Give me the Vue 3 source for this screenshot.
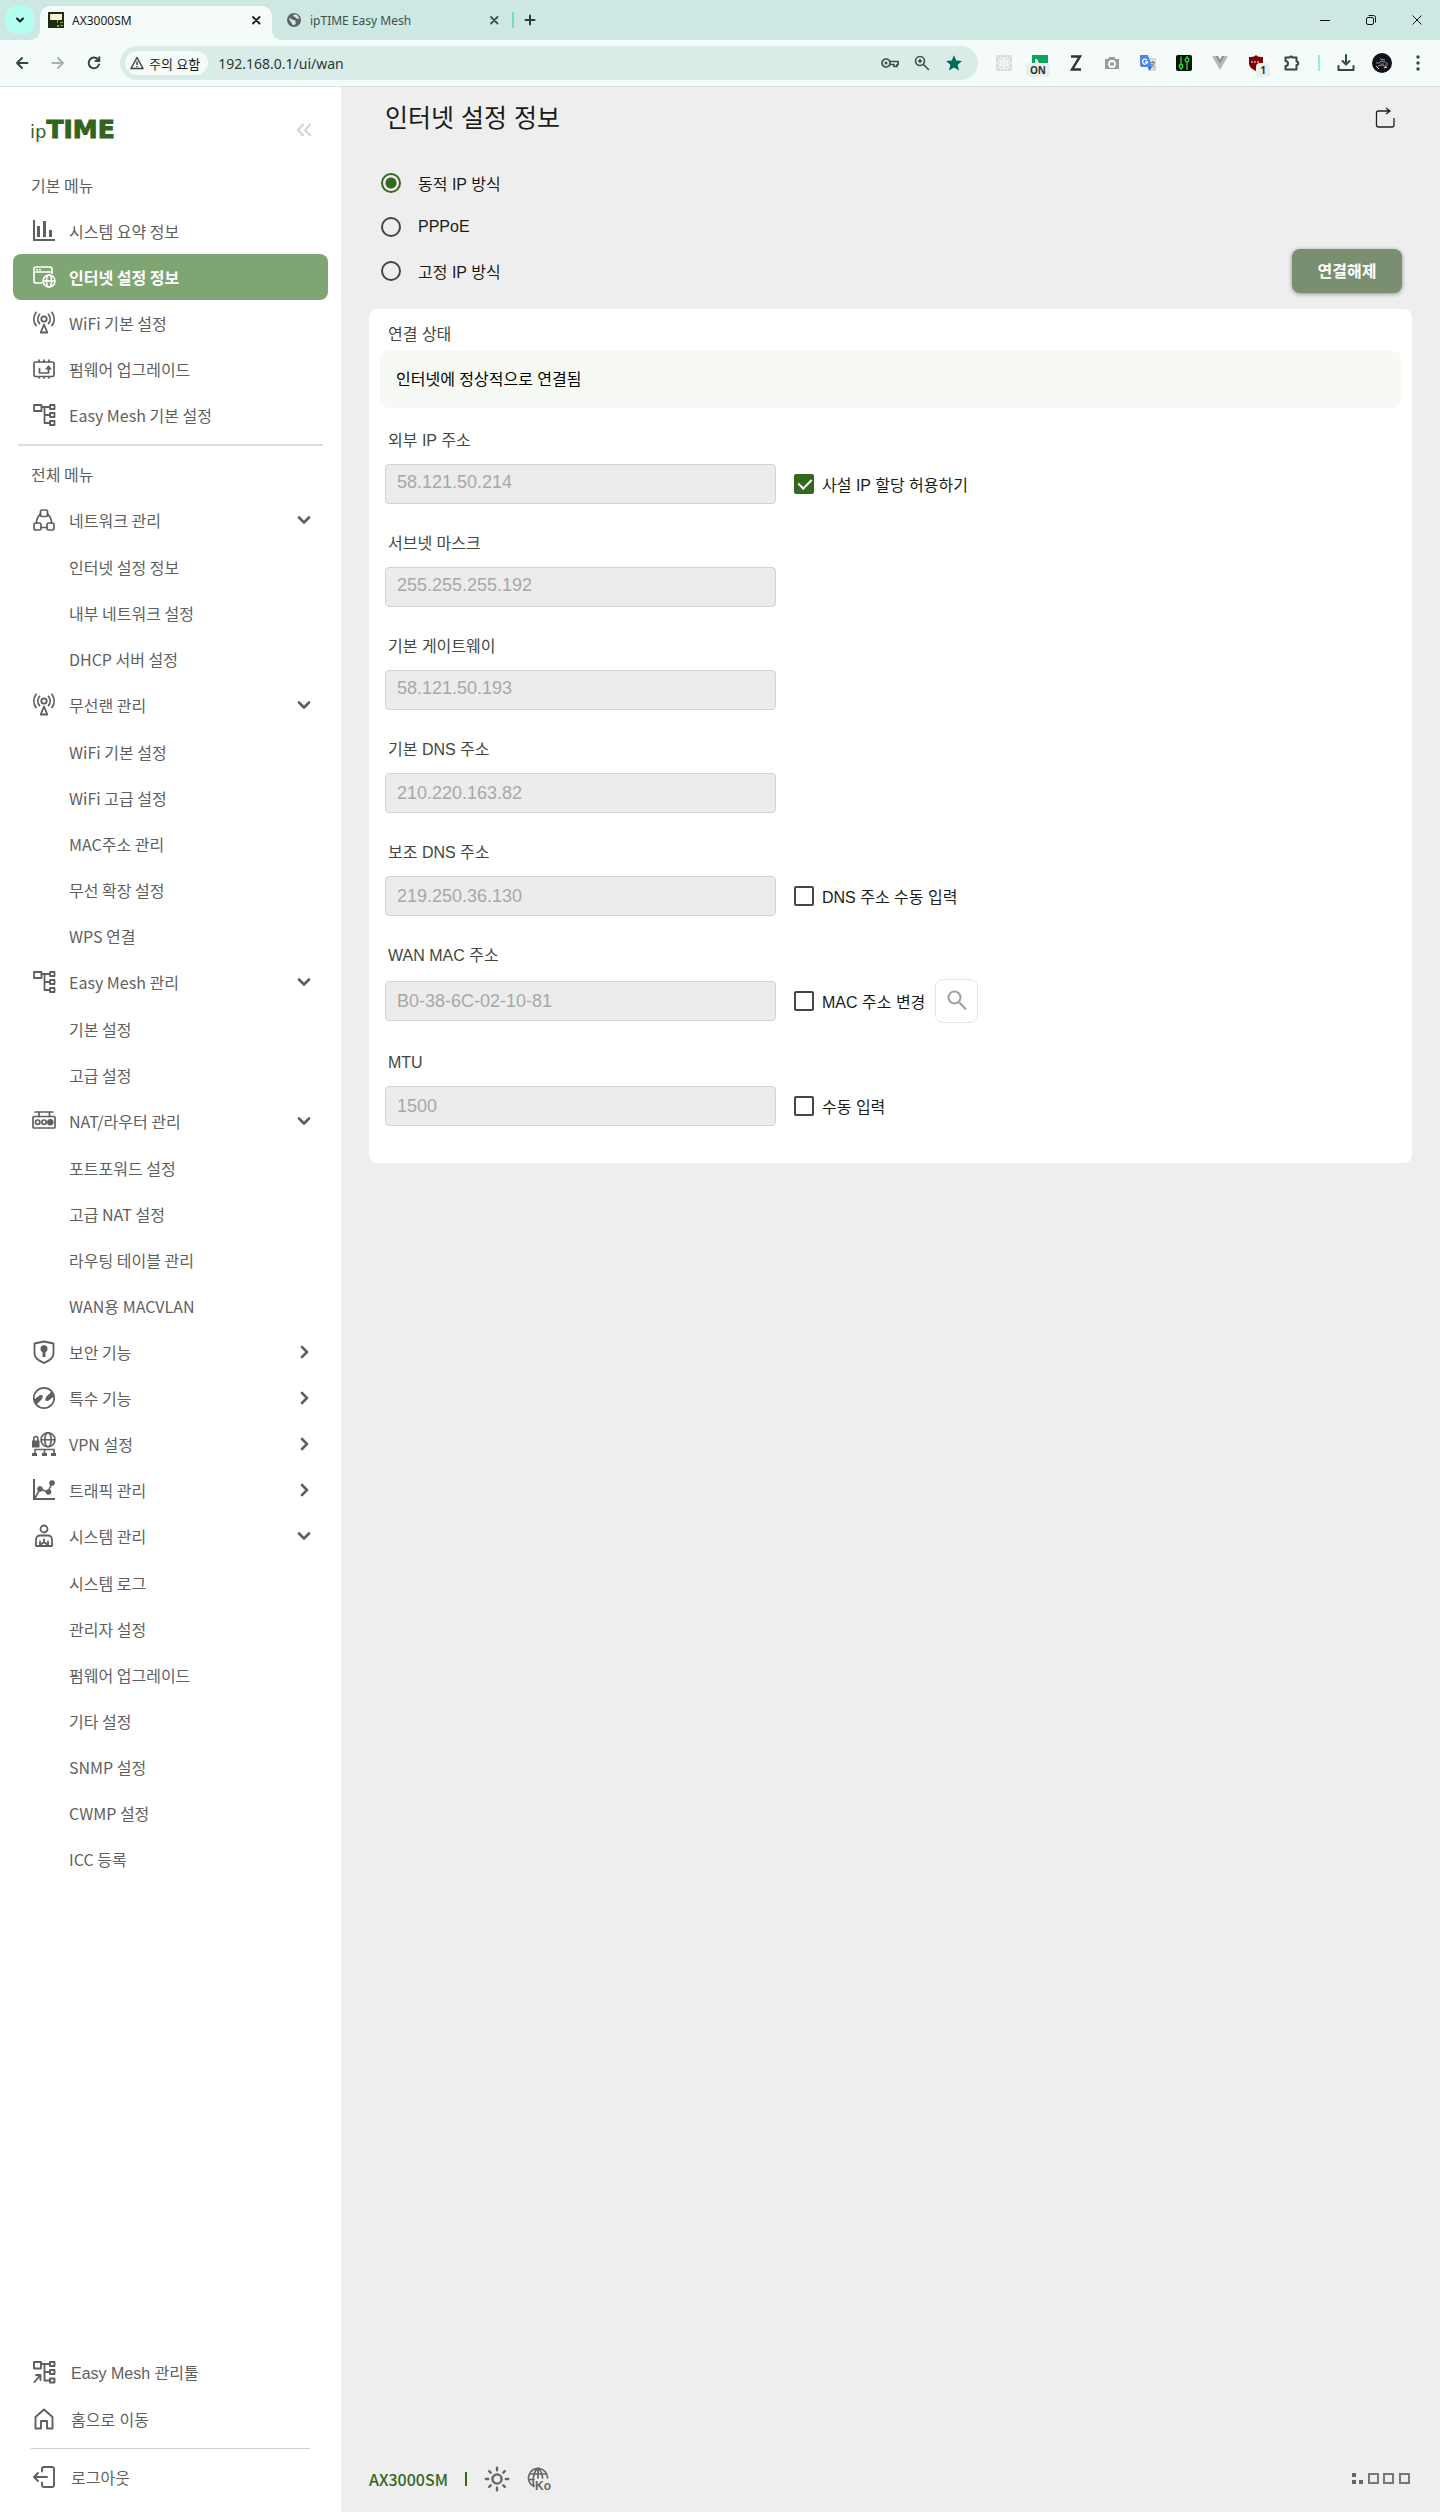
<template>
  <div class="window">

    <!-- TAB STRIP -->
    <header class="tab-strip">
      <button class="tab-search" type="button" aria-label="탭 검색">
        <svg width="12" height="12" viewBox="0 0 12 12" v-html="icons.tabDown"></svg>
      </button>

      <div class="tab tab-active">
        <svg width="16" height="16" viewBox="0 0 16 16" v-html="icons.router"></svg>
        <span class="tab-title">AX3000SM</span>
        <button class="tab-close" type="button" aria-label="탭 닫기">
          <svg width="16" height="16" viewBox="0 0 16 16" v-html="icons.close"></svg>
        </button>
      </div>

      <div class="tab tab-idle">
        <svg width="16" height="16" viewBox="0 0 16 16" v-html="icons.world"></svg>
        <span class="tab-title">ipTIME Easy Mesh</span>
        <button class="tab-close" type="button" aria-label="탭 닫기">
          <svg width="16" height="16" viewBox="0 0 16 16" v-html="icons.close"></svg>
        </button>
      </div>

      <button class="tab-new" type="button" aria-label="새 탭">
        <svg width="16" height="16" viewBox="0 0 16 16" v-html="icons.plus"></svg>
      </button>

      <div class="window-buttons">
        <button v-for="name in ['winMin', 'winRestore', 'winClose']" :key="name" type="button" :aria-label="name">
          <svg width="12" height="12" viewBox="0 0 12 12" v-html="icons[name]"></svg>
        </button>
      </div>
    </header>

    <!-- TOOLBAR -->
    <div class="toolbar">
      <button
        v-for="name in ['back', 'forward', 'reload']"
        :key="name"
        class="tool"
        type="button"
        :aria-label="name"
      >
        <svg width="16" height="16" viewBox="0 0 16 16" v-html="icons[name]"></svg>
      </button>

      <div class="omnibox">
        <button class="chip" type="button">
          <svg width="14" height="14" viewBox="0 0 14 14" v-html="icons.warning"></svg>
          주의 요함
        </button>
        <input v-model="address" class="address" type="text" aria-label="주소창">
        <button v-for="name in ['key', 'zoom', 'star']" :key="name" class="omni-tool" type="button" :aria-label="name">
          <svg width="18" height="18" viewBox="0 0 18 18" v-html="icons[name]"></svg>
        </button>
      </div>

      <button v-for="ext in extensions" :key="ext.icon" class="tool" type="button" :aria-label="ext.icon">
        <svg width="16" height="16" viewBox="0 0 16 16" v-html="icons[ext.icon]"></svg>
        <span v-if="ext.badge" class="badge" :class="'badge-' + ext.icon">{{ ext.badge }}</span>
      </button>

      <span class="tool-divider"></span>

      <button v-for="name in ['download', 'avatar', 'more']" :key="name" class="tool" type="button" :aria-label="name">
        <svg width="20" height="20" viewBox="0 0 20 20" v-html="icons[name]"></svg>
      </button>
    </div>

    <div class="page">

      <!-- SIDEBAR -->
      <aside class="sidebar">
        <div class="brand">
          <a href="#" class="logo" @click.prevent><span class="logo-ip">ip</span><span class="logo-time">TIME</span></a>
          <button type="button" aria-label="메뉴 접기">
            <svg width="24" height="24" viewBox="0 0 24 24" v-html="icons.collapse"></svg>
          </button>
        </div>

        <nav>
          <h2 class="menu-title">기본 메뉴</h2>
          <a
            v-for="item in basicMenu"
            :key="item.label"
            href="#"
            class="menu-item"
            :class="{ active: item.label === currentMenu }"
            @click.prevent="currentMenu = item.label"
          >
            <svg width="24" height="24" viewBox="0 0 24 24" v-html="icons[item.icon]"></svg>
            {{ item.label }}
          </a>

          <hr class="menu-line">

          <h2 class="menu-title">전체 메뉴</h2>
          <div v-for="group in fullMenu" :key="group.label">
            <button class="menu-item" type="button" :aria-expanded="group.open" @click="group.open = !group.open">
              <svg width="24" height="24" viewBox="0 0 24 24" v-html="icons[group.icon]"></svg>
              {{ group.label }}
              <svg
                class="chevron"
                width="24"
                height="24"
                viewBox="0 0 24 24"
                v-html="group.open ? icons.chevronDown : icons.chevronRight"
              ></svg>
            </button>
            <div v-if="group.open && group.children.length" class="submenu">
              <a v-for="child in group.children" :key="child" href="#" class="submenu-item" @click.prevent>
                {{ child }}
              </a>
            </div>
          </div>
        </nav>

        <div class="side-bottom">
          <a href="#" class="bottom-item" @click.prevent>
            <svg width="24" height="24" viewBox="0 0 24 24" v-html="icons.meshTool"></svg>
            Easy Mesh 관리툴
          </a>
          <a href="#" class="bottom-item" @click.prevent>
            <svg width="24" height="24" viewBox="0 0 24 24" v-html="icons.home"></svg>
            홈으로 이동
          </a>
          <hr class="bottom-line">
          <a href="#" class="bottom-item" @click.prevent>
            <svg width="24" height="24" viewBox="0 0 24 24" v-html="icons.logout"></svg>
            로그아웃
          </a>
        </div>
      </aside>

      <!-- MAIN CONTENT -->
      <main class="content">
        <div class="content-head">
          <h1>인터넷 설정 정보</h1>
          <button type="button" aria-label="새로고침">
            <svg width="24" height="24" viewBox="0 0 24 24" v-html="icons.refresh"></svg>
          </button>
        </div>

        <div class="mode-row">
          <div class="modes">
            <label v-for="mode in modes" :key="mode.value" class="mode">
              <input v-model="wanMode" type="radio" name="wan-mode" :value="mode.value">
              {{ mode.label }}
            </label>
          </div>
          <button class="disconnect" type="button">연결해제</button>
        </div>

        <section class="card">
          <h3 class="field-label">연결 상태</h3>
          <p class="status">인터넷에 정상적으로 연결됨</p>

          <div v-for="field in fields" :key="field.id" class="field">
            <label class="field-label" :for="field.id">{{ field.label }}</label>
            <div class="field-row">
              <input
                :id="field.id"
                class="field-input"
                :class="{ raised: field.fixed }"
                type="text"
                :value="field.value"
                disabled
              >
              <label v-if="field.check" class="check">
                <input v-model="field.checked" type="checkbox">
                {{ field.check }}
              </label>
              <button v-if="field.search" class="search" type="button" aria-label="MAC 주소 검색">
                <svg width="24" height="24" viewBox="0 0 24 24" v-html="icons.search"></svg>
              </button>
            </div>
          </div>
        </section>

        <!-- FOOTER -->
        <footer class="content-foot">
          <span class="model">AX3000SM</span>
          <span class="foot-line"></span>
          <button type="button" aria-label="테마">
            <svg width="26" height="26" viewBox="0 0 26 26" v-html="icons.sun"></svg>
          </button>
          <button type="button" aria-label="언어">
            <svg width="26" height="26" viewBox="0 0 26 26" v-html="icons.language"></svg>
          </button>
          <svg class="ports" width="60" height="14" viewBox="0 0 60 14" v-html="icons.ports"></svg>
        </footer>
      </main>
    </div>
  </div>
</template>

<script setup>
import { ref } from 'vue'

const address = ref('192.168.0.1/ui/wan')
const currentMenu = ref('인터넷 설정 정보')
const wanMode = ref('dynamic')

const extensions = [
  { icon: 'react' },
  { icon: 'toggle', badge: 'ON' },
  { icon: 'zed' },
  { icon: 'camera' },
  { icon: 'translate' },
  { icon: 'sliders' },
  { icon: 'vue' },
  { icon: 'shieldExt', badge: '1' },
  { icon: 'puzzle' }
]

const basicMenu = [
  { icon: 'bars', label: '시스템 요약 정보' },
  { icon: 'internet', label: '인터넷 설정 정보' },
  { icon: 'wifi', label: 'WiFi 기본 설정' },
  { icon: 'firmware', label: '펌웨어 업그레이드' },
  { icon: 'mesh', label: 'Easy Mesh 기본 설정' }
]

const fullMenu = ref([
  { icon: 'network', label: '네트워크 관리', open: true, children: ['인터넷 설정 정보', '내부 네트워크 설정', 'DHCP 서버 설정'] },
  { icon: 'wifi', label: '무선랜 관리', open: true, children: ['WiFi 기본 설정', 'WiFi 고급 설정', 'MAC주소 관리', '무선 확장 설정', 'WPS 연결'] },
  { icon: 'mesh', label: 'Easy Mesh 관리', open: true, children: ['기본 설정', '고급 설정'] },
  { icon: 'nat', label: 'NAT/라우터 관리', open: true, children: ['포트포워드 설정', '고급 NAT 설정', '라우팅 테이블 관리', 'WAN용 MACVLAN'] },
  { icon: 'security', label: '보안 기능', open: false, children: [] },
  { icon: 'special', label: '특수 기능', open: false, children: [] },
  { icon: 'vpn', label: 'VPN 설정', open: false, children: [] },
  { icon: 'traffic', label: '트래픽 관리', open: false, children: [] },
  {
    icon: 'system',
    label: '시스템 관리',
    open: true,
    children: ['시스템 로그', '관리자 설정', '펌웨어 업그레이드', '기타 설정', 'SNMP 설정', 'CWMP 설정', 'ICC 등록']
  }
])

const modes = [
  { value: 'dynamic', label: '동적 IP 방식' },
  { value: 'pppoe', label: 'PPPoE' },
  { value: 'static', label: '고정 IP 방식' }
]

const fields = ref([
  { id: 'ip', label: '외부 IP 주소', value: '58.121.50.214', fixed: true, check: '사설 IP 할당 허용하기', checked: true },
  { id: 'mask', label: '서브넷 마스크', value: '255.255.255.192', fixed: true },
  { id: 'gateway', label: '기본 게이트웨이', value: '58.121.50.193', fixed: true },
  { id: 'dns1', label: '기본 DNS 주소', value: '210.220.163.82' },
  { id: 'dns2', label: '보조 DNS 주소', value: '219.250.36.130', check: 'DNS 주소 수동 입력', checked: false },
  { id: 'mac', label: 'WAN MAC 주소', value: 'B0-38-6C-02-10-81', check: 'MAC 주소 변경', checked: false, search: true },
  { id: 'mtu', label: 'MTU', value: '1500', check: '수동 입력', checked: false }
])

const line = (width, body) =>
  `<g fill="none" stroke="currentColor" stroke-width="${width}" stroke-linecap="round" stroke-linejoin="round">${body}</g>`

const icons = {
  // browser
  tabDown: line(2, '<path d="M3 4.5l3 3 3-3"/>'),
  router: '<path fill="#1d2b14" d="M0 0h16v16H0z"/><path fill="#fbf3cf" d="M2 2h12v6H2z"/><path fill="#e6dcae" d="M2 2h1v6H2z"/><path fill="#7fae3f" d="M9 8h1v3H9zM9 13h2v2H9zM12 10h3v1h-3zM12 13h3v1h-3z"/>',
  world: '<circle cx="8" cy="8" r="7" fill="#5f6368"/><path fill="#cde8e2" d="M3 6c2 0 3 2 5 2s1 2 2 3c-1 2-2 2-3 2-2-1-1-3-3-4zM7 3c1 0 2-1 4 0 1 1 2 2 2 4-2 0-3-1-4-2-1 0-2-1-2-2z"/>',
  close: line('1.8', '<path d="M5 5l6.500 6.500M11.500 5L5 11.500"/>'),
  plus: line(2, '<path d="M8 3.500v9M3.500 8h9"/>'),
  winMin: '<path stroke="#111" d="M1 6.500h10"/>',
  winRestore: '<g fill="none" stroke="#111"><rect x="1.500" y="3.500" width="7" height="7" rx="1.500"/><path d="M3.500 1.500h5a2 2 0 0 1 2 2v5"/></g>',
  winClose: '<path stroke="#111" d="M1.500 1.500l9 9M10.500 1.500l-9 9"/>',
  back: line(2, '<path d="M13.500 8H3M8 3L3 8l5 5"/>'),
  forward: '<g opacity="0.400">' + line(2, '<path d="M2.500 8H13M8 3l5 5-5 5"/>') + '</g>',
  reload: line(2, '<path d="M13 9.500A5.300 5.300 0 1 1 12 4.500"/><path d="M13.300 2.200v3.800H9.500"/>'),
  warning: '<g fill="none" stroke="#3a4543" stroke-width="1.500" stroke-linejoin="round"><path d="M7 1.500l6 11H1z"/><path d="M7 5.500v3.500M7 10v1.200"/></g>',
  key: line('1.700', '<circle cx="5" cy="9" r="4"/><path d="M9 7.500h8.200v3H16v2h-3v-2H9"/>') + '<circle cx="5" cy="9" r="1.500" fill="currentColor"/>',
  zoom: line('1.600', '<circle cx="7" cy="7" r="4.500"/><path d="M10.500 10.500l5 5M7 5.500v3M5.500 7h3"/>'),
  star: '<path fill="#006b5f" d="M9 1.200l2.300 5.300 5.700.5-4.300 3.800 1.300 5.700L9 13.500l-5 3 1.300-5.700L1 7l5.700-.5z"/>',
  react: '<path fill="#dcdfde" d="M0 0h16v16H0z"/><g fill="none" stroke="#f7f9f8"><ellipse cx="8" cy="8" rx="6.500" ry="2.500"/><ellipse cx="8" cy="8" rx="6.500" ry="2.500" transform="rotate(60 8 8)"/><ellipse cx="8" cy="8" rx="6.500" ry="2.500" transform="rotate(120 8 8)"/></g><circle cx="8" cy="8" r="1.500" fill="#f7f9f8"/>',
  toggle: '<path fill="#0ba360" d="M0 0h16v8H0z"/><path fill="#fff" d="M3 4h2l2 4H3z"/>',
  zed: '<path fill="none" stroke="#333" stroke-width="2.400" d="M3 1.500h9L4 14.500h9"/>',
  camera: '<path fill="#9c9c9c" d="M1 4h3l1-2h6v2h4v10H1z"/><circle cx="8" cy="9" r="3" fill="none" stroke="#fff" stroke-width="1.800"/>',
  translate: '<path fill="#d5d8dc" d="M6 3h10v13H9z"/><path fill="#4a86ec" d="M0 0h8l4 12H2a2 2 0 0 1-2-2z"/><path fill="#3367d6" d="M8 12h4l-3 4z"/><path fill="none" stroke="#fff" stroke-width="1.300" d="M7 5a2.500 2.500 0 1 0 .5 2H5"/><path fill="none" stroke="#697d92" d="M10.500 7.500H15M12.500 6v1.500M14 7.500c-.5 2-1.500 3-3 4.500M11.500 9l3 3.500"/>',
  sliders: '<rect width="16" height="16" rx="2" fill="#071007"/><g fill="none" stroke="#18ef35" stroke-width="1.300"><path d="M5 1.500v8M5 13v2M11 1v2M11 7v8"/><circle cx="5" cy="11.300" r="1.800"/><circle cx="11" cy="5" r="1.800"/></g>',
  vue: '<path fill="#b5b8b7" d="M0 1h3.500L8 9l4.500-8H16L8 15z"/><path fill="#8c8f8e" d="M3.500 1H6l2 3.500L10 1h2.500L8 9z"/>',
  shieldExt: '<path fill="#800000" d="M8 0c2 2 4 2 7 2v6c0 4-3 6-7 8-4-2-7-4-7-8V2c3 0 5 0 7-2z"/><path stroke="#fff" d="M3 7h2M6 7h2M9 7h2"/>',
  puzzle: line(2, '<path d="M1.500 2.500h4a1.700 1.700 0 0 1 3 0h4V6.500a1.700 1.700 0 0 1 0 3.500v4.500h-11V11a2.500 2.500 0 0 0 0-5z"/>'),
  download: line(2, '<path d="M10 2v9M6.500 8l3.500 3.500L13.500 8M2.500 13v4h15v-4"/>'),
  avatar: '<circle cx="10" cy="10" r="10" fill="#10121a"/><path fill="none" stroke="#8492b5" d="M4 10h3l2-2 4 1 3 2M6 13l4-1 5 2M8 6l5 1"/><path stroke="#b5774b" d="M8 11h4M13 12h3"/><path stroke="#d5dae6" d="M4 13l3 3M12 15l3-1"/>',
  more: '<g fill="currentColor"><circle cx="10" cy="4" r="1.700"/><circle cx="10" cy="10" r="1.700"/><circle cx="10" cy="16" r="1.700"/></g>',

  // sidebar
  collapse: '<path fill="none" stroke="#d2d2d2" stroke-width="2" d="M11.500 6L6 12l5.500 6M18.500 6L13 12l5.500 6"/>',
  chevronDown: line('2.600', '<path d="M7 9.500l5 5 5-5"/>'),
  chevronRight: line('2.600', '<path d="M10 7l5 5-5 5"/>'),
  bars: '<path fill="currentColor" d="M1 1h2v19h20v2H1zM5 7h3v11H5zM11 2h3v16h-3zM17 11h3v7h-3z"/>',
  internet: '<g fill="none" stroke="currentColor" stroke-width="1.700"><path d="M10 18H4a2 2 0 0 1-2-2V4a2 2 0 0 1 2-2h14a2 2 0 0 1 2 2v5M2 7h18"/><circle cx="17" cy="16" r="6"/><ellipse cx="17" cy="16" rx="2.500" ry="6"/><path d="M11 16h12"/></g><path fill="currentColor" d="M4 4h2v1.500H4zM7 4h2v1.500H7z"/>',
  wifi: line('1.800', '<circle cx="12" cy="8" r="2.700"/><path d="M12 13.500L8.700 21.500h6.600zM7.500 3.500a7 7 0 0 0 0 9M16.500 3.500a7 7 0 0 1 0 9M4 1.500a11 11 0 0 0 0 13M20 1.500a11 11 0 0 1 0 13"/>'),
  firmware: line('1.700', '<rect x="2" y="5" width="20" height="14.500" rx="1.500"/><path d="M7 3V5M12 3V5M17 3V5M7 19.500V21M12 19.500V21M17 19.500V21M7.500 11.500v4.500h9V11"/>') + '<path fill="currentColor" d="M13 12.500L16.500 8l3.500 4.500z"/>',
  mesh: line('1.800', '<rect x="2" y="2" width="7.500" height="6"/><rect x="18" y="2" width="4.500" height="4"/><rect x="18" y="10" width="4.500" height="4"/><rect x="18" y="18" width="4.500" height="4"/><path d="M9.500 4H18M12.500 4v16H18M12.500 12H18"/>'),
  network: line('1.700', '<rect x="8.500" y="2" width="7" height="6.500" rx="1.500"/><rect x="2" y="15" width="7" height="7" rx="1.500"/><rect x="15" y="15" width="7" height="7" rx="1.500"/><path d="M8.500 6C6 8 4.500 11 4.500 15M15.500 6c2.500 2 4 5 4 9M9 19.500h6"/>'),
  nat: line('1.700', '<rect x="1" y="7.500" width="22" height="11.500" rx="1"/><path d="M3 3h18M7 3v4.500M17.500 3v4.500"/><circle cx="5.700" cy="13.200" r="2.200"/><circle cx="12" cy="13.200" r="2.200"/>') + '<circle cx="18.300" cy="13.200" r="3.200" fill="currentColor"/>',
  security: line('1.800', '<path d="M2.500 3.500L12 1.500l9.500 2v10c0 5-4.500 7-9.500 9.500-5-2.500-9.500-4.500-9.500-9.500z"/>') + '<circle cx="12" cy="8.700" r="3.500" fill="currentColor"/><path fill="currentColor" d="M10.500 9h3v8h-3z"/>',
  special: line('1.700', '<circle cx="12" cy="12" r="10.200"/>') + '<path fill="currentColor" d="M1.500 14l6.500-5 3 .5-1 3.500-6 6zM22.500 10L16 15l-3-.5 1-3.500 6-6z"/>',
  vpn: '<g fill="none" stroke="currentColor" stroke-width="1.600"><circle cx="16" cy="7.800" r="7"/><ellipse cx="16" cy="7.800" rx="3.200" ry="7"/><path d="M9 7.800h14M1.800 9V6.500a2 2 0 0 1 4 0V9M3 21v-3.500h19V21M12.500 17.500V21"/></g><path fill="currentColor" d="M0 8.500h7.500v7H0zM0 21h5v3H0zM10 21h5v3h-5zM19 21h5v3h-5z"/>',
  traffic: '<path fill="currentColor" d="M1 1h2v19h20v2H1z"/><path fill="none" stroke="currentColor" stroke-width="1.600" d="M3 20L8 11l8 3 4-9"/><g fill="currentColor"><circle cx="8" cy="11" r="2.800"/><circle cx="16.500" cy="14" r="2.800"/><circle cx="20" cy="5" r="2.800"/></g>',
  system: line('1.800', '<circle cx="12" cy="5" r="3.500"/><path d="M4 22v-6.500a4 4 0 0 1 4-4h8a4 4 0 0 1 4 4V22zM8 17.500V22M12 15.500V18M16 17.500V22M12 18l-2.500 2M12 18l2.500 2"/>'),
  meshTool: line('1.900', '<rect x="2" y="2" width="7" height="6.500"/><rect x="18" y="2" width="4.500" height="4"/><rect x="18" y="10" width="4.500" height="4"/><rect x="18" y="18.500" width="4.500" height="4"/><path d="M9 4h9M12.500 4v16.500H18M12.500 12H18M2.500 22l6-7M4 15h4.500v5"/>'),
  home: line('1.900', '<path d="M3.500 10L12 2.500 20.500 10v11.500h-5.500V14H9v7.500H3.500z"/>'),
  logout: line('1.900', '<path d="M10 6.500V4a2 2 0 0 1 2-2h8a2 2 0 0 1 2 2v16a2 2 0 0 1-2 2h-8a2 2 0 0 1-2-2v-2.500M15 12H2M6 8l-4 4 4 4"/>'),

  // content
  refresh: '<g fill="none" stroke="#222" stroke-width="1.300"><path d="M16 5H5.500A2 2 0 0 0 3.500 7v12a2 2 0 0 0 2 2h13.500a2 2 0 0 0 2-2v-7M13 2L17 5 13 8"/></g>',
  search: '<g fill="none" stroke="#a3a3a3" stroke-width="2.200"><circle cx="9.500" cy="8.500" r="6"/><path d="M13.800 13l7.200 7.500"/></g>',
  sun: line('2.400', '<circle cx="13" cy="13" r="4.600"/><path d="M13 1.800v2.400M13 21.800v2.400M1.800 13h2.400M21.800 13h2.400M5.200 5.200l1.500 1.500M19.300 19.300l1.500 1.500M5.200 20.800l1.500-1.500M19.300 6.700l1.500-1.500"/>'),
  language: line('1.700', '<path d="M7 20.500A9.500 9.500 0 1 1 20.500 12M7 20.500C5.500 15 6 6 11 2M11 2c3 3 4.500 6 4.500 10M11 2v10M2.500 8h17M2 13.500h5"/>') + '<text x="8" y="24" font-size="12" font-weight="600" fill="currentColor">Ko</text>',
  ports: '<g fill="#666"><path d="M0 1h4v4H0zM0 8h4v4H0zM7 8h4v4H7z"/></g><g fill="none" stroke="#777" stroke-width="2"><path d="M17 2h9v9h-9zM32 2h9v9h-9zM48 2h9v9h-9z"/></g>'
}
</script>

<style>
body {
  margin: 0;
}
</style>

<style scoped>
* {
  box-sizing: border-box;
}

.window {
  display: flex;
  flex-direction: column;
  min-height: 100vh;
  font-family: "Liberation Sans", "Noto Sans CJK KR", sans-serif;
  font-size: 16px;
  color: #1b1c18;
}

button {
  display: flex;
  align-items: center;
  justify-content: center;
  padding: 0;
  border: 0;
  background: none;
  color: inherit;
  font: inherit;
  cursor: pointer;
}

a {
  color: inherit;
  text-decoration: none;
}

svg {
  flex: none;
}

/* tab strip */
.tab-strip {
  display: flex;
  align-items: flex-end;
  height: 40px;
  padding-left: 6px;
  background: #cde8e2;
  font-family: "Noto Sans", "Noto Sans CJK KR", sans-serif;
  font-size: 12px;
}

.tab-search {
  width: 28px;
  height: 28px;
  margin: 0 6px 6px 0;
  border-radius: 10px;
  background: #b2fff1;
}

.tab {
  position: relative;
  display: flex;
  align-items: center;
  gap: 8px;
  height: 34px;
  padding-bottom: 6px;
}

.tab-active {
  width: 232px;
  padding: 0 8px 6px;
  border-radius: 10px 10px 0 0;
  background: #f5fbf9;
}

.tab-active::before,
.tab-active::after {
  content: "";
  position: absolute;
  bottom: 0;
  width: 10px;
  height: 10px;
}

.tab-active::before {
  left: -10px;
  background: radial-gradient(circle at 0 0, transparent 10px, #f5fbf9 10px);
}

.tab-active::after {
  right: -10px;
  background: radial-gradient(circle at 100% 0, transparent 10px, #f5fbf9 10px);
}

.tab-idle {
  width: 240px;
  padding: 0 10px 6px 14px;
  color: #3c524d;
}

.tab-idle::after {
  content: "";
  position: absolute;
  right: -2px;
  top: 6px;
  width: 2px;
  height: 16px;
  background: #74dccb;
}

.tab-title {
  flex: 1;
}

.tab-new {
  width: 36px;
  height: 28px;
  margin-bottom: 6px;
  color: #24403a;
}

.window-buttons {
  display: flex;
  align-self: stretch;
  margin-left: auto;
}

.window-buttons button {
  width: 46px;
}

/* toolbar */
.toolbar {
  display: flex;
  align-items: center;
  height: 47px;
  padding: 0 4px;
  border-bottom: 1px solid #d5e2df;
  background: #f5fbf9;
  color: #2f4a45;
  font-family: "Noto Sans", "Noto Sans CJK KR", sans-serif;
}

.tool {
  position: relative;
  width: 36px;
  height: 36px;
}

.omnibox {
  display: flex;
  flex: 1;
  align-items: center;
  height: 34px;
  margin: 0 8px;
  padding: 0 8px 0 5px;
  border-radius: 17px;
  background: #daece8;
}

.chip {
  gap: 5px;
  height: 24px;
  padding: 0 8px 0 5px;
  border-radius: 12px;
  background: #f5fbf9;
  color: #171d1b;
  font-size: 13px;
}

.address {
  flex: 1;
  min-width: 0;
  padding: 0 10px;
  border: 0;
  background: none;
  color: #2b3836;
  font: inherit;
  font-size: 14px;
}

.omni-tool {
  width: 32px;
  height: 32px;
  color: #3c4f4b;
}

.badge {
  position: absolute;
  right: 8px;
  bottom: 4px;
  padding: 0 4px;
  border-radius: 4px;
  background: #e8efed;
  color: #333;
  font-size: 10px;
  font-weight: 700;
  line-height: 14px;
}

.badge-shieldExt {
  right: 4px;
}

.tool-divider {
  width: 2px;
  height: 16px;
  margin: 0 8px;
  background: #8ff0e0;
}

.page {
  display: flex;
  flex: 1;
}

/* sidebar */
.sidebar {
  display: flex;
  flex: none;
  flex-direction: column;
  width: 341px;
  background: #fff;
  color: #5f5f5f;
  font-family: "Noto Sans CJK KR", sans-serif;
}

.brand {
  display: flex;
  align-items: center;
  justify-content: space-between;
  height: 75px;
  padding: 10px 25px 0 30px;
}

.logo {
  display: flex;
  align-items: baseline;
  color: #33641f;
  font-family: "DejaVu Sans", sans-serif;
}

.logo-ip {
  font-size: 18px;
}

.logo-time {
  font-size: 25px;
  font-weight: 700;
  line-height: 24px;
  -webkit-text-stroke: 1px #33641f;
}

.menu-title {
  height: 46px;
  margin: 0;
  padding-left: 31px;
  font-size: 16px;
  font-weight: 400;
  line-height: 46px;
}

.menu-item {
  display: flex;
  align-items: center;
  justify-content: flex-start;
  gap: 13px;
  width: 315px;
  height: 46px;
  margin-left: 13px;
  padding: 0 12px 0 19px;
  border-radius: 8px;
}

.menu-item.active {
  background: #7fa572;
  color: #fff;
  font-weight: 700;
}

.chevron {
  margin-left: auto;
}

.menu-line {
  height: 2px;
  margin: 6px 18px 5px;
  border: 0;
  background: #deded9;
}

.submenu {
  padding-top: 1px;
}

.submenu-item {
  display: block;
  height: 46px;
  padding-left: 69px;
  line-height: 46px;
}

.side-bottom {
  margin-top: auto;
  padding-bottom: 12px;
  font-family: "Liberation Sans", "Noto Sans CJK KR", sans-serif;
}

.bottom-item {
  display: flex;
  align-items: center;
  gap: 15px;
  height: 47px;
  padding-left: 32px;
}

.bottom-line {
  height: 1px;
  margin: 6px 31px 4px;
  border: 0;
  background: #cdd0c4;
}

/* content */
.content {
  display: flex;
  flex: 1;
  flex-direction: column;
  padding: 0 28px 20px;
  background: #eee;
}

.content-head {
  display: flex;
  align-items: center;
  justify-content: space-between;
  height: 62px;
  padding: 0 15px 0 16px;
}

.content-head h1 {
  margin: 0;
  padding-bottom: 4px;
  font-size: 25px;
  font-weight: 400;
}

.mode-row {
  display: flex;
  align-items: flex-end;
  justify-content: space-between;
  margin: 12px 0 16px;
  padding: 0 10px 0 12px;
}

.mode {
  display: flex;
  align-items: center;
  gap: 17px;
  height: 44px;
}

.mode input {
  appearance: none;
  width: 20px;
  height: 20px;
  margin: 0;
  border: 2px solid #43483f;
  border-radius: 50%;
}

.mode input:checked {
  border-color: #33691e;
  background: radial-gradient(circle, #33691e 5px, transparent 6px);
}

.disconnect {
  width: 110px;
  height: 44px;
  padding-bottom: 2px;
  border-radius: 8px;
  background: #7a8f70;
  box-shadow: 0 1px 4px rgba(0, 0, 0, 0.4);
  color: #fff;
  font-weight: 700;
}

.card {
  padding: 14px 11px 9px;
  border-radius: 8px;
  background: #fff;
}

.field-label {
  display: block;
  margin: 0;
  padding-left: 8px;
  color: #43483f;
  font-size: 16px;
  font-weight: 400;
  line-height: 24px;
}

.status {
  height: 57px;
  margin: 4px 0 21px;
  padding-left: 16px;
  border-radius: 8px;
  background: #f7f9f4;
  color: #000;
  line-height: 57px;
}

.field {
  margin-bottom: 28px;
}

.field-row {
  display: flex;
  align-items: center;
  margin-top: 11px;
  padding-left: 5px;
}

.field-input {
  width: 391px;
  height: 40px;
  padding: 0 11px;
  border: 1px solid #d3d3d3;
  border-radius: 4px;
  background: #ececec;
  color: #a8a8a8;
  font: inherit;
  font-size: 18px;
}

.field-input.raised {
  padding-bottom: 4px;
}

.check {
  display: flex;
  align-items: center;
  gap: 8px;
  margin-left: 18px;
}

.check input {
  appearance: none;
  width: 20px;
  height: 20px;
  margin: 0;
  border: 2px solid #43483f;
  border-radius: 2px;
}

.check input:checked {
  border-color: #33691e;
  background: #33691e;
}

.check input:checked::after {
  content: "";
  display: block;
  width: 6px;
  height: 11px;
  margin: 0 5px;
  border: solid #fff;
  border-width: 0 2px 2px 0;
  transform: rotate(45deg);
}

.search {
  width: 43px;
  height: 44px;
  margin-left: 10px;
  border: 1px solid #e6e6e6;
  border-radius: 8px;
}

.content-foot {
  display: flex;
  align-items: center;
  gap: 17px;
  height: 26px;
  margin-top: auto;
  color: #666;
}

.model {
  color: #33691e;
  font-family: "Noto Sans CJK KR", sans-serif;
  font-weight: 500;
}

.foot-line {
  width: 2px;
  height: 14px;
  background: #33691e;
}

.ports {
  margin-left: auto;
}
</style>
